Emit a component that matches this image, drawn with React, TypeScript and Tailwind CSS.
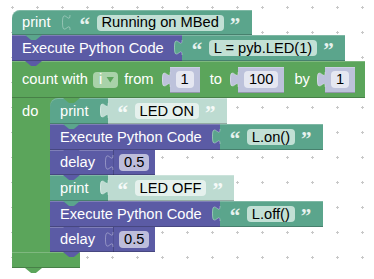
import React from "react";

const EDGE = "shadow-[inset_0_1px_0_rgba(255,255,255,0.22),inset_0_-1px_0_rgba(0,0,0,0.22)]";

const Tab = ({ fill }: { fill: string }) => (
  <svg className="absolute left-[-8px] top-[5px] overflow-visible" width="9" height="15" viewBox="0 0 9 15">
    <path d="M8.5 0 C8.5 10 0 -8 0 7.5 S8.5 5 8.5 15 Z" fill={fill} />
    <path d="M8 0 C8 10 0.5 -8 0.5 7.5 S8 5 8 15" fill="none" stroke="rgba(255,255,255,0.35)" />
  </svg>
);

const Notch = ({ bg, left = "left-[13px]" }: { bg: string; left?: string }) => (
  <div className={`absolute top-full z-10 h-[5px] w-[17px] ${left} ${bg} [clip-path:polygon(0_0,100%_0,64%_100%,36%_100%)]`} />
);

const Quote = ({ ch, cls = "" }: { ch: string; cls?: string }) => (
  <span className={`w-[9px] self-start pt-[5px] font-['Liberation_Serif'] text-[21px] font-bold leading-none text-white/85 ${cls}`}>
    {ch}
  </span>
);

const TextBlock = ({ text, shadow }: { text: string; shadow?: boolean }) => (
  <div
    className={`relative flex items-center pl-[10px] pr-[13px] ${EDGE} ${
      shadow ? "bg-[#bddbd1]" : "bg-[#5ba58c]"
    }`}
  >
    <Tab fill={shadow ? "#bddbd1" : "#5ba58c"} />
    <Quote ch="“" />
    <span
      className={`ml-[8px] flex h-[16px] items-center rounded-[4px] px-[5px] leading-none text-black ${
        shadow ? "bg-[#e5f1ed]" : "bg-[#c2e0d5]"
      }`}
    >
      {text}
    </span>
    <Quote ch="”" cls="ml-[6px]" />
  </div>
);

const NumBlock = ({ value }: { value: string }) => (
  <div className={`relative flex h-[26px] items-center bg-[#bdc2db] px-[6px] ${EDGE}`}>
    <Tab fill="#bdc2db" />
    <span className="flex h-[17px] items-center rounded-[4px] bg-[#e5e7f1] px-[5px] leading-none text-black">
      {value}
    </span>
  </div>
);

const PrintRow = ({ text, shadow, first }: { text: string; shadow?: boolean; first?: boolean }) => (
  <div className="relative flex h-[26px]">
    <div className={`flex items-center bg-[#5ba58c] pl-[10px] pr-[19px] ${EDGE} ${first ? "rounded-tl-[8px]" : ""}`}>
      print
    </div>
    <TextBlock text={text} shadow={shadow} />
    <Notch bg="bg-[#5ba58c]" />
  </div>
);

const ExecRow = ({ code }: { code: string }) => (
  <div className="relative flex h-[26px]">
    <div className={`flex items-center bg-[#5b5ba5] pl-[10px] pr-[18px] ${EDGE}`}>Execute Python Code</div>
    <TextBlock text={code} />
    <Notch bg="bg-[#5b5ba5]" />
  </div>
);

const DelayRow = ({ value }: { value: string }) => (
  <div className="relative flex h-[25px]">
    <div className={`flex items-center bg-[#5b5ba5] pl-[10px] pr-[18px] ${EDGE}`}>delay</div>
    <div className="relative flex items-center bg-[#5b5ba5] px-[6px] shadow-[inset_1px_0_0_rgba(0,0,0,0.2),inset_0_-1px_0_rgba(0,0,0,0.22)]">
      <Tab fill="#5b5ba5" />
      <span className="flex h-[17px] items-center rounded-[4px] bg-[#bdbddb] px-[5px] leading-none text-black">
        {value}
      </span>
    </div>
    <Notch bg="bg-[#5b5ba5]" />
  </div>
);

export default function App() {
  return (
    <div className="relative h-[279px] w-[374px] overflow-hidden bg-white font-['Liberation_Sans',sans-serif] text-[11pt] leading-none text-white">
      <svg className="absolute inset-0" width="374" height="279">
        <defs>
          <pattern id="grid" width="25" height="25" patternUnits="userSpaceOnUse">
            <rect x="11" y="7" width="3" height="1" fill="#c8c8c8" />
            <rect x="12" y="6" width="1" height="3" fill="#c8c8c8" />
          </pattern>
        </defs>
        <rect width="374" height="279" fill="url(#grid)" />
      </svg>

      <div className="relative flex flex-col items-start pl-[12px] pt-[10px]">
        <div className="relative flex h-[25px]">
          <div className={`flex items-center rounded-tl-[8px] bg-[#5ba58c] pl-[10px] pr-[19px] ${EDGE}`}>print</div>
          <TextBlock text="Running on MBed" />
          <Notch bg="bg-[#5ba58c]" />
        </div>

        <ExecRow code="L = pyb.LED(1)" />

        <div className="flex flex-col items-start">
          <div className={`relative flex h-[37px] items-center bg-[#5ba55b] pl-[10px] pr-[10px] ${EDGE}`}>
            <span>count with</span>
            <span className="ml-[5px] flex h-[16px] items-center gap-[4px] rounded-[4px] bg-[#a9d2a9] pl-[6px] pr-[4px]">
              <span>i</span>
              <span className="h-[6px] w-[8px] bg-[#5ba55b] [clip-path:polygon(0_0,100%_0,50%_100%)]" />
            </span>
            <span className="ml-[6px]">from</span>
            <div className="ml-[16px]">
              <NumBlock value="1" />
            </div>
            <span className="ml-[10px]">to</span>
            <div className="ml-[16px]">
              <NumBlock value="100" />
            </div>
            <span className="ml-[10px]">by</span>
            <div className="ml-[15px]">
              <NumBlock value="1" />
            </div>
            <Notch bg="bg-[#5ba55b]" left="left-[51px]" />
          </div>

          <div className="flex">
            <div className="w-[38px] bg-[#5ba55b]">
              <div className="flex h-[26px] items-center pl-[10px]">do</div>
            </div>
            <div className="flex flex-col items-start">
              <div className="bg-[#5ba55b]">
                <PrintRow text="LED ON" shadow first />
              </div>
              <ExecRow code="L.on()" />
              <DelayRow value="0.5" />
              <PrintRow text="LED OFF" shadow />
              <ExecRow code="L.off()" />
              <DelayRow value="0.5" />
            </div>
          </div>

          <div className={`relative h-[16px] w-[68px] bg-[#5ba55b] ${EDGE}`}>
            <Notch bg="bg-[#5ba55b]" />
          </div>
        </div>
      </div>
    </div>
  );
}
